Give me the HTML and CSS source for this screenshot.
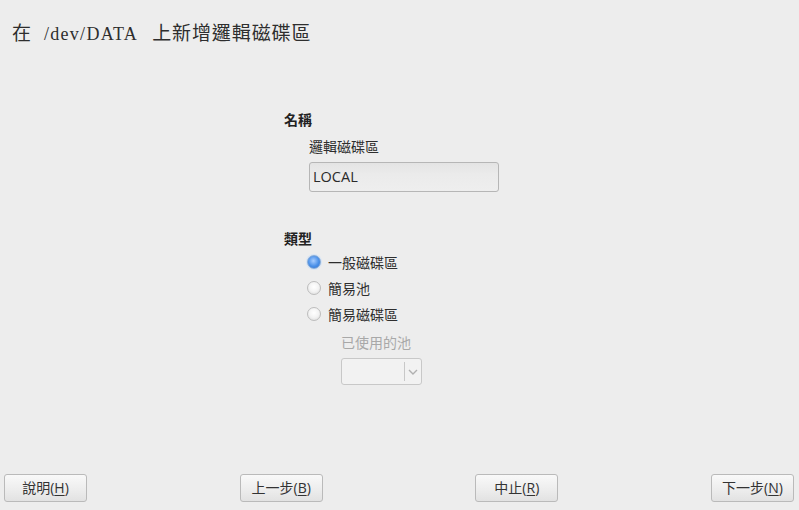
FILE: index.html
```html
<!DOCTYPE html>
<html lang="zh-Hant">
<head>
<meta charset="utf-8">
<link rel="stylesheet" href="styles.css">
</head>
<body>
<div class="page">
  <h1 class="title"><span class="cjk">在</span><span class="latin">/dev/DATA</span><span class="cjk">上新增邏輯磁碟區</span></h1>
  <main class="content">
    <div class="form">
      <div class="section-label">名稱</div>
      <div class="indent">
        <div class="field-label">邏輯磁碟區</div>
        <div class="textfield">LOCAL</div>
      </div>
      <div class="section-label type-label">類型</div>
      <div class="indent">
        <div class="radio-row"><span class="radio checked"></span><span>一般磁碟區</span></div>
        <div class="radio-row"><span class="radio"></span><span>簡易池</span></div>
        <div class="radio-row"><span class="radio"></span><span>簡易磁碟區</span></div>
        <div class="pool">
          <div class="field-label disabled">已使用的池</div>
          <div class="combo">
            <span class="combo-value"></span>
            <span class="combo-arrow">
              <svg width="10" height="6" viewBox="0 0 10 6"><path d="M1 1 L5 5 L9 1" fill="none" stroke="#b0b0b0" stroke-width="1.4"/></svg>
            </span>
          </div>
        </div>
      </div>
    </div>
  </main>
  <footer class="buttons">
    <button class="btn">說明(<u>H</u>)</button>
    <button class="btn">上一步(<u>B</u>)</button>
    <button class="btn">中止(<u>R</u>)</button>
    <button class="btn">下一步(<u>N</u>)</button>
  </footer>
</div>
</body>
</html>
```

FILE: styles.css
```css
html, body {
  margin: 0;
  padding: 0;
  background: #ededed;
}
body {
  font-family: "Open Sans", "Noto Sans CJK TC", sans-serif;
  font-size: 14px;
  color: #2e2e2e;
}
.page {
  width: 799px;
  height: 510px;
  display: flex;
  flex-direction: column;
  box-sizing: border-box;
}
.title {
  margin: 0;
  padding: 22px 0 0 12px;
  font-family: "Liberation Serif", "Noto Sans CJK TC", serif;
  font-weight: normal;
  line-height: 20px;
  height: 20px;
  color: #2e2e2e;
  display: flex;
  align-items: baseline;
  white-space: nowrap;
}
.title .cjk {
  font-family: "Noto Sans CJK TC", sans-serif;
  font-size: 19px;
  letter-spacing: 0.9px;
}
.title .latin {
  font-size: 18px;
  letter-spacing: 1.3px;
  margin: 0 14px 0 12px;
}
.content {
  flex: 1;
  padding-left: 284px;
}
.form {
  margin-top: 68px;
}
.section-label {
  font-weight: bold;
  line-height: 20px;
  height: 20px;
  color: #222;
}
.type-label {
  margin-top: 37px;
}
.indent {
  padding-left: 25px;
}
.field-label {
  margin-top: 7px;
  line-height: 20px;
  height: 20px;
}
.field-label.disabled {
  color: #a8a8a8;
  margin-top: 6px;
}
.textfield {
  margin-top: 5px;
  width: 190px;
  height: 30px;
  box-sizing: border-box;
  border: 1px solid #b6b6b6;
  border-radius: 3px;
  background: linear-gradient(#e4e4e4, #ebebeb 40%, #eeeeee);
  padding: 0 3px;
  line-height: 28px;
  font-size: 14.5px;
  color: #2a2a2a;
}
.radio-row {
  display: flex;
  align-items: center;
  height: 26px;
  gap: 7px;
}
.radio {
  width: 14px;
  height: 14px;
  border-radius: 50%;
  box-sizing: border-box;
  border: 1px solid #bdbdbd;
  background: radial-gradient(circle at 50% 40%, #ffffff 0%, #f3f3f3 50%, #d8d8d8 100%);
  margin-left: -2px;
}
.radio.checked {
  border-color: #87acd9;
  background: radial-gradient(circle at 45% 40%, #a6ccff 0%, #4a90e8 55%, #2f6fcc 100%);
  box-shadow: 0 0 0 1px #d6e4f5;
}
.pool {
  padding-left: 32px;
}
.combo {
  margin-top: 5px;
  width: 81px;
  height: 27px;
  box-sizing: border-box;
  border: 1px solid #c8c8c8;
  border-radius: 3px;
  background: #f2f2f2;
  display: flex;
}
.combo-value {
  flex: 1;
}
.combo-arrow {
  width: 16px;
  border-left: 1px solid #c8c8c8;
  margin: 3px 0;
  display: flex;
  align-items: center;
  justify-content: center;
}
.buttons {
  display: flex;
  justify-content: space-between;
  padding: 0 5px 8px 4px;
}
.btn {
  width: 83px;
  height: 28px;
  box-sizing: border-box;
  border: 1px solid #bababa;
  border-radius: 3px;
  background: linear-gradient(#f9f9f9, #ececec 60%, #e2e2e2);
  font-family: "Open Sans", "Noto Sans CJK TC", sans-serif;
  font-size: 14px;
  color: #333;
  padding: 0;
  line-height: 26px;
}
.btn u {
  text-decoration-thickness: 1px;
  text-underline-offset: 2px;
}
```
